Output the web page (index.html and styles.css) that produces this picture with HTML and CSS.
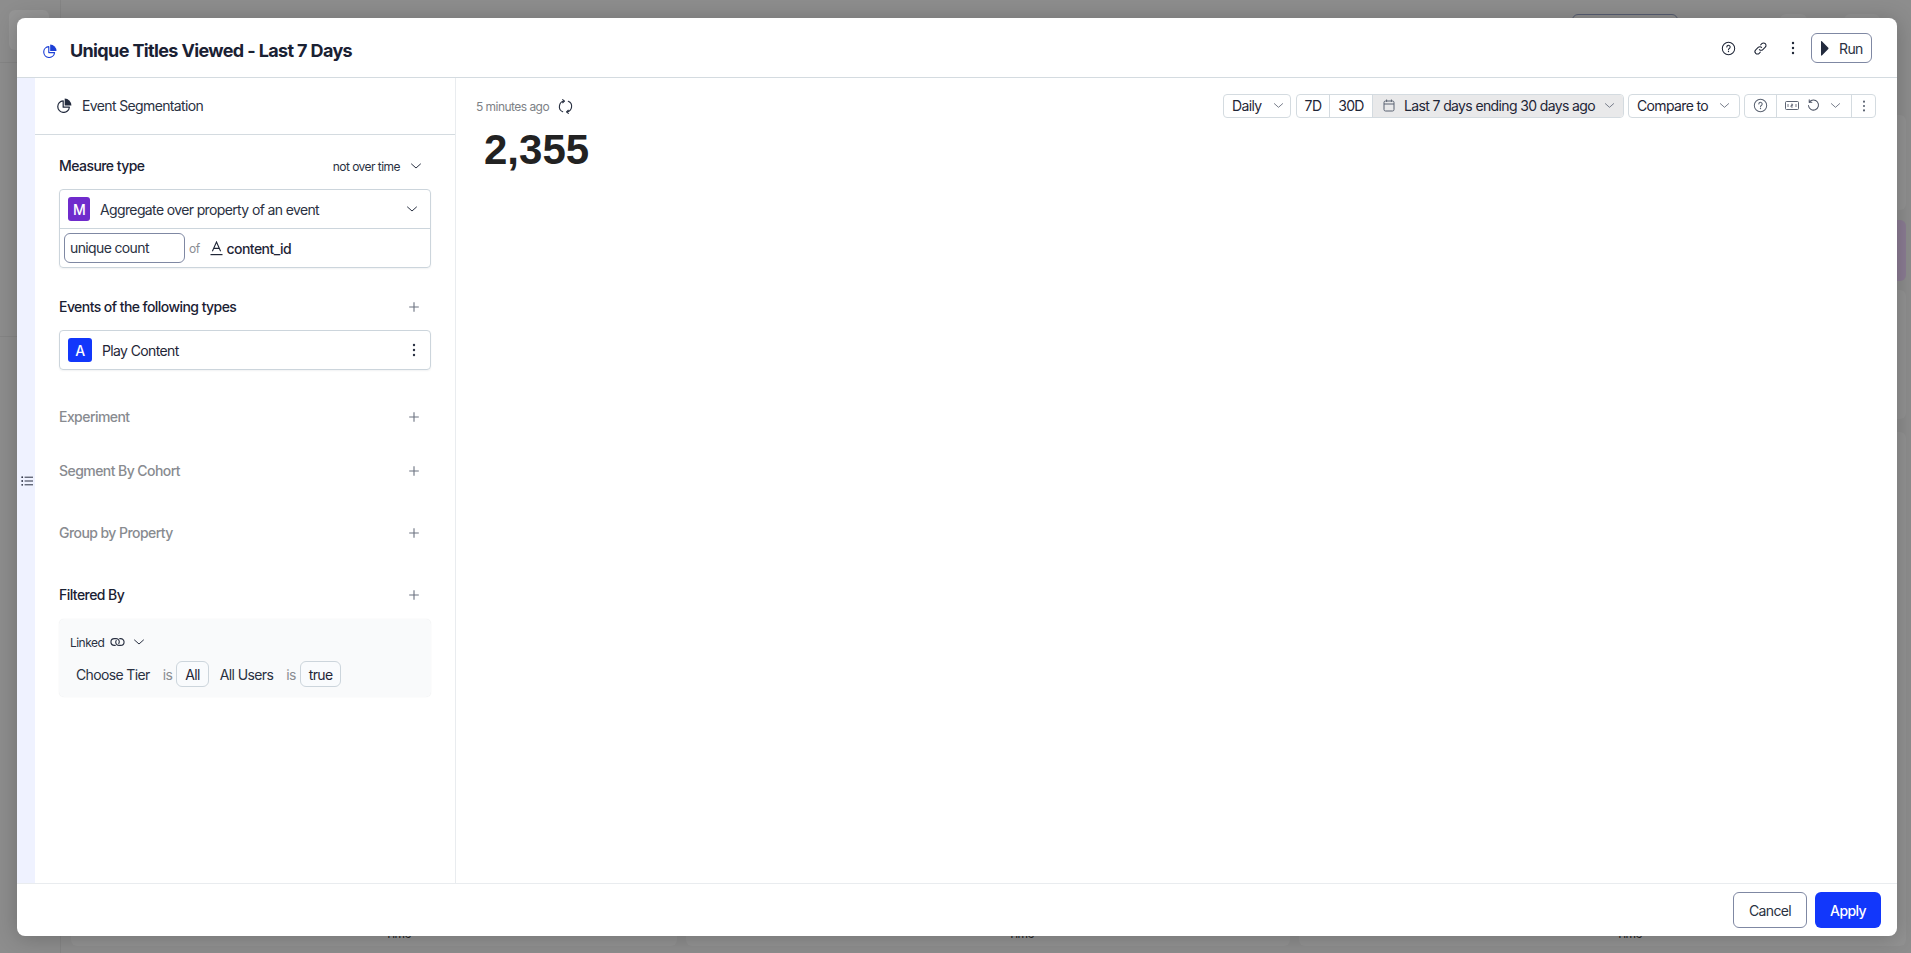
FILE: index.html
```html
<!DOCTYPE html>
<html lang="en">
<head>
<meta charset="utf-8">
<title>Unique Titles Viewed - Last 7 Days</title>
<link rel="stylesheet" href="styles.css">
</head>
<body>
<svg class="sprites" width="0" height="0" aria-hidden="true">
  <symbol id="chev" viewBox="0 0 12 12"><path d="M1.5 4l4.5 4 4.5-4" fill="none" stroke="currentColor" stroke-width="1" stroke-linecap="round" stroke-linejoin="round"/></symbol>
  <symbol id="plus" viewBox="0 0 12 12"><path d="M6 1.2v9.6M1.2 6h9.6" fill="none" stroke="currentColor" stroke-width="1.1"/></symbol>
  <symbol id="kebab" viewBox="0 0 12 16"><circle cx="6" cy="3" r="1.2" fill="currentColor"/><circle cx="6" cy="8" r="1.2" fill="currentColor"/><circle cx="6" cy="13" r="1.2" fill="currentColor"/></symbol>
  <symbol id="help" viewBox="0 0 16 16"><circle cx="8" cy="8" r="6.6" fill="none" stroke="currentColor" stroke-width="1.1"/><path d="M6.2 6.4a1.8 1.8 0 1 1 2.7 1.6c-.6.35-.9.7-.9 1.3" fill="none" stroke="currentColor" stroke-width="1.1" stroke-linecap="round"/><circle cx="8" cy="11.2" r=".7" fill="currentColor"/></symbol>
  <symbol id="pie" viewBox="0 0 16 16"><path d="M6.6 3a6.2 6.2 0 1 0 6.6 6.8H6.6z" fill="none" stroke="currentColor" stroke-width="1.3" stroke-linejoin="round"/><path d="M8.2 .6v7.5h7.2A7.3 7.3 0 0 0 8.2 .6z" fill="currentColor"/></symbol>
</svg>

<div class="backdrop">
  <div class="rail">
    <div class="rail-top"><span class="rail-logo"></span></div>
    <div class="rail-mid"></div>
  </div>
  <div class="dash">
    <div class="dash-top">
      <span class="ghost-btn ghost-dark"></span>
      <span class="ghost-btn ghost-sm"></span>
      <span class="ghost-btn ghost-md"></span>
    </div>
    <div class="dash-grid">
      <div class="dash-card"><span class="time-label time-1">Time</span></div>
      <div class="dash-card"><span class="time-label time-2">Time</span></div>
      <div class="dash-stack">
        <div class="dash-card card-a"></div>
        <div class="dash-card card-purple"></div>
        <div class="dash-card card-b"></div>
        <div class="dash-card card-c"><span class="time-label time-3">Time</span></div>
      </div>
    </div>
  </div>
</div>

<div class="scrim">
  <div class="modal">
    <header class="modal-head">
      <svg class="title-icon"><use href="#pie"/></svg>
      <h1 class="title">Unique Titles Viewed - Last 7 Days</h1>
      <div class="head-actions">
        <svg class="hicon"><use href="#help"/></svg>
        <svg class="hicon link-icon" viewBox="0 0 16 16"><g fill="none" stroke="currentColor" stroke-width="1.1" stroke-linecap="round"><path d="M6.8 9.2a2.6 2.6 0 0 0 3.7 0l2.6-2.6a2.6 2.6 0 0 0-3.7-3.7L8.2 4.1"/><path d="M9.2 6.8a2.6 2.6 0 0 0-3.7 0L2.9 9.4a2.6 2.6 0 0 0 3.7 3.7l1.2-1.2"/></g></svg>
        <svg class="hicon kebab-icon"><use href="#kebab"/></svg>
        <button class="run-btn"><svg class="play" viewBox="0 0 9 15"><path d="M1 0.6c0-.5.5-.7.9-.4l6.4 6.6c.3.3.3.8 0 1.1l-6.4 6.6c-.4.3-.9.1-.9-.4z" fill="currentColor"/></svg><span>Run</span></button>
      </div>
    </header>

    <div class="modal-body">
      <div class="strip">
        <svg class="list-icon" viewBox="0 0 12 12"><g fill="#2a3142"><circle cx="1.2" cy="2.2" r=".9"/><circle cx="1.2" cy="6" r=".9"/><circle cx="1.2" cy="9.8" r=".9"/></g><path d="M3.6 2.2H12M3.6 6H12M3.6 9.8H12" stroke="#2a3142" stroke-width="1"/></svg>
      </div>

      <aside class="side">
        <div class="side-head">
          <svg class="seg-icon"><use href="#pie"/></svg>
          <span>Event Segmentation</span>
        </div>
        <div class="side-content">
          <div class="sec-row sec-row-measure">
            <span class="sec-label">Measure type</span>
            <span class="over-time">not over time<svg class="chev chev-time"><use href="#chev"/></svg></span>
          </div>
          <div class="box box-measure">
            <div class="measure-top">
              <span class="badge badge-m">M</span>
              <span class="measure-text">Aggregate over property of an event</span>
              <svg class="chev chev-measure"><use href="#chev"/></svg>
            </div>
            <div class="measure-bottom">
              <span class="count-select">unique count</span>
              <span class="of">of</span>
              <svg class="prop-icon" viewBox="0 0 13 15"><path d="M2.4 10.2L6.5 1l4.1 9.2M3.7 7.4h5.6" fill="none" stroke="#1f2637" stroke-width="1.1"/><path d="M.5 13.6h12" stroke="#1f2637" stroke-width="1.2"/></svg>
              <span class="prop-name">content_id</span>
            </div>
          </div>

          <div class="sec-row gap-events">
            <span class="sec-label">Events of the following types</span>
            <svg class="plus"><use href="#plus"/></svg>
          </div>
          <div class="box box-event">
            <span class="badge badge-a">A</span>
            <span class="event-text">Play Content</span>
            <svg class="event-kebab"><use href="#kebab"/></svg>
          </div>

          <div class="sec-row gap-experiment">
            <span class="sec-label muted">Experiment</span>
            <svg class="plus"><use href="#plus"/></svg>
          </div>
          <div class="sec-row gap-cohort">
            <span class="sec-label muted">Segment By Cohort</span>
            <svg class="plus"><use href="#plus"/></svg>
          </div>
          <div class="sec-row gap-group">
            <span class="sec-label muted">Group by Property</span>
            <svg class="plus"><use href="#plus"/></svg>
          </div>
          <div class="sec-row gap-group">
            <span class="sec-label">Filtered By</span>
            <svg class="plus"><use href="#plus"/></svg>
          </div>
          <div class="filter-panel">
            <div class="linked">
              <span>Linked</span>
              <svg class="linked-icon" viewBox="0 0 16 10"><g fill="none" stroke="#2a3142" stroke-width="1.2" stroke-linecap="round"><path d="M5.6 8.6H4.6a3.6 3.6 0 0 1 0-7.2h2a3.4 3.4 0 0 1 2.8 5.2"/><path d="M10.4 1.4h1a3.6 3.6 0 0 1 0 7.2h-2a3.4 3.4 0 0 1-2.8-5.2"/></g></svg>
              <svg class="chev chev-linked"><use href="#chev"/></svg>
            </div>
            <div class="filters">
              <span class="f-name f-tier">Choose Tier</span>
              <span class="f-is">is</span>
              <span class="chip">All</span>
              <span class="f-name f-users">All Users</span>
              <span class="f-is">is</span>
              <span class="chip">true</span>
            </div>
          </div>
        </div>
      </aside>

      <main class="main">
        <div class="toolbar">
          <div class="status">
            <span class="ago">5 minutes ago</span>
            <svg class="refresh" viewBox="0 0 16 16"><g fill="none" stroke="#2a3142" stroke-width="1.2" stroke-linecap="round" stroke-linejoin="round"><path d="M5 13.6A6 6 0 0 1 6.6 2.2"/><path d="M11 2.4a6 6 0 0 1-1.6 11.4"/><path d="M5 .6L6.8 2.3 5 4"/><path d="M11 15.4L9.2 13.7 11 12"/></g></svg>
          </div>
          <div class="controls">
            <div class="group group-daily">
              <span class="cell cell-daily">Daily<svg class="chev chev-tb"><use href="#chev"/></svg></span>
            </div>
            <div class="group group-date">
              <span class="cell cell-7d">7D</span>
              <span class="cell cell-30d">30D</span>
              <span class="cell cell-range">
                <svg class="cal" viewBox="0 0 12 13"><g fill="none" stroke="#5b6372" stroke-width="1"><rect x="1" y="2" width="10" height="10" rx="1.5"/><path d="M1 5h10M3.6 .5v2.4M8.4 .5v2.4"/></g></svg>
                Last 7 days ending 30 days ago<svg class="chev chev-range"><use href="#chev"/></svg>
              </span>
            </div>
            <div class="group group-compare">
              <span class="cell cell-compare">Compare to<svg class="chev chev-compare"><use href="#chev"/></svg></span>
            </div>
            <div class="group group-tools">
              <span class="cell cell-help"><svg class="tool-help"><use href="#help"/></svg></span>
              <span class="cell cell-tools">
                <svg class="num-icon" viewBox="0 0 14 9"><rect x=".5" y=".5" width="13" height="8" rx="1" fill="none" stroke="#4b5263" stroke-width=".9"/><path d="M3 3v3M6 3.2h1.6v1.3H6V6h1.8M11 3v3" fill="none" stroke="#4b5263" stroke-width=".8"/></svg>
                <svg class="undo" viewBox="0 0 14 14"><path d="M2.6 3.4A5.4 5.4 0 1 1 1.6 7" fill="none" stroke="#4b5263" stroke-width="1.1" stroke-linecap="round"/><path d="M2.4 .8v2.8h2.8" fill="none" stroke="#4b5263" stroke-width="1.1" stroke-linecap="round" stroke-linejoin="round"/></svg>
                <svg class="chev chev-tools"><use href="#chev"/></svg>
              </span>
              <span class="cell cell-more"><svg class="more"><use href="#kebab"/></svg></span>
            </div>
          </div>
        </div>
        <div class="metric">2,355</div>
      </main>
    </div>

    <footer class="modal-foot">
      <button class="btn btn-cancel">Cancel</button>
      <button class="btn btn-apply">Apply</button>
    </footer>
  </div>
</div>
</body>
</html>
```
FILE: styles.css
```css
* { box-sizing: border-box; letter-spacing: -.045em; }
html, body { margin: 0; height: 100%; }
body {
  position: relative;
  width: 1911px;
  height: 953px;
  overflow: hidden;
  background: #8d8d8d;
  font-family: Inter, "Liberation Sans", sans-serif;
  font-size: 14px;
  color: #1f2637;
}
.sprites { position: absolute; }
svg { display: block; flex: none; }

/* dimmed dashboard behind the dialog */
.backdrop { display: flex; width: 1911px; height: 953px; }
.rail { width: 61px; border-right: 1px solid #858585; flex: none; }
.rail-top { height: 63px; padding: 10px 9px; border-bottom: 1px solid #858585; }
.rail-logo { display: block; width: 40px; height: 40px; border-radius: 6px; background: #969696; }
.rail-mid { height: 274px; border-bottom: 1px solid #858585; }
.dash { flex: 1; padding: 14px 5px 7px 10px; display: flex; flex-direction: column; }
.dash-top { height: 101px; display: flex; justify-content: flex-end; padding-right: 26px; flex: none; }
.ghost-btn { height: 22px; border-radius: 6px; background: #929292; }
.ghost-dark { width: 106px; margin-right: 102px; background: none; border: 1px solid #555c70; }
.ghost-sm { width: 27px; margin-right: 37px; }
.ghost-md { width: 36px; }
.dash-grid { flex: 1; display: grid; grid-template-columns: 606px 604px 1fr; gap: 9px; }
.dash-card { position: relative; border-radius: 6px; background: #929292; }
.dash-stack { display: flex; flex-direction: column; }
.card-a { height: 95px; margin-bottom: 10px; }
.card-purple { height: 61px; margin-bottom: 9px; background: #8b7c93; }
.card-b { height: 129px; margin-bottom: 13px; }
.card-c { flex: 1; }
.time-label { position: absolute; bottom: 5px; font-size: 12px; line-height: 14px; color: #222; }
.time-1 { left: 314px; }
.time-2 { left: 322px; }
.time-3 { left: 317px; }

/* dialog */
.scrim {
  position: absolute;
  inset: 0;
  padding: 18px 14px 17px 17px;
}
.modal {
  height: 918px;
  display: flex;
  flex-direction: column;
  background: #fff;
  border-radius: 8px;
  overflow: hidden;
  box-shadow: 0 2px 22px rgba(0, 0, 0, .22);
}
.modal-head {
  height: 60px;
  flex: none;
  display: flex;
  align-items: center;
  padding: 0 25px 0 26px;
  border-bottom: 1px solid #d4dbe0;
}
.title-icon { width: 14px; height: 14px; color: #1c3fd6; margin: 7px 13px 0 0; }
.title { margin: 7px 0 0; font-size: 18px; line-height: 24px; font-weight: 700; letter-spacing: -.035em; color: #1a2133; }
.head-actions { margin: 1px 0 0 auto; display: flex; align-items: center; color: #1f2637; }
.hicon { width: 15px; height: 15px; margin-right: 17px; }
.link-icon { margin-right: 19px; }
.kebab-icon { width: 12px; height: 16px; margin-right: 12px; }
.run-btn {
  width: 61px;
  height: 30px;
  display: flex;
  align-items: center;
  padding: 0 0 0 8px;
  background: #fff;
  border: 1px solid #7f88a3;
  border-radius: 6px;
  font: 400 14px Inter, sans-serif;
  color: #2a3142;
}
.play { width: 9px; height: 15px; margin-right: 10px; color: #232b3e; }

.modal-body { flex: 1; display: flex; min-height: 0; }
.strip {
  width: 18px;
  flex: none;
  background: #eff2ff;
  padding: 397px 0 0 4px;
}
.list-icon { width: 12px; height: 12px; }
.side { width: 421px; flex: none; border-right: 1px solid #e9ecef; }
.side-head {
  height: 57px;
  display: flex;
  align-items: center;
  padding: 0 0 1px 22px;
  border-bottom: 1px solid #d4dbe0;
  color: #2a3142;
}
.seg-icon { width: 15px; height: 15px; margin-right: 10px; color: #232b3e; }
.side-content { padding: 21px 24px 0; }
.sec-row { height: 20px; display: flex; align-items: center; justify-content: space-between; padding-right: 11px; }
.sec-row-measure { padding-right: 9px; }
.sec-label { font-weight: 500; line-height: 20px; letter-spacing: -.04em; color: #1a2133; }
.muted { color: #888b90; }
.over-time { display: flex; align-items: center; font-size: 12px; color: #2a3142; }
.chev { width: 12px; height: 12px; color: #2a3142; }
.chev-time { margin-left: 10px; }
.plus { width: 12px; height: 12px; color: #6b7280; }

.box {
  border: 1px solid #ccd5dc;
  border-radius: 4px;
  box-shadow: 0 1px 2px rgba(20, 30, 50, .06);
}
.box-measure { margin-top: 13px; height: 79px; }
.measure-top { height: 39px; display: flex; align-items: center; padding-left: 8px; border-bottom: 1px solid #ccd5dc; }
.badge {
  display: flex;
  align-items: center;
  justify-content: center;
  color: #fff;
  font-weight: 500;
  font-size: 14px;
  border-radius: 3px;
  flex: none;
}
.badge-m { width: 22px; height: 24px; background: #6f2bcc; }
.badge-a { width: 24px; height: 24px; background: #1237fb; }
.measure-text { margin-left: 10px; color: #2a3142; }
.chev-measure { margin-left: auto; margin-right: 12px; }
.measure-bottom { height: 38px; display: flex; align-items: center; padding-left: 4px; }
.count-select {
  width: 121px;
  height: 30px;
  display: flex;
  align-items: center;
  padding: 0 0 1px 5px;
  border: 1px solid #7f88a3;
  border-radius: 6px;
  color: #2a3142;
}
.of { margin-left: 4px; font-size: 12px; color: #8a8d92; }
.prop-icon { width: 13px; height: 15px; margin-left: 10px; }
.prop-name { margin-left: 4px; font-weight: 500; letter-spacing: -.04em; color: #1f2637; }

.gap-events { margin-top: 29px; }
.box-event { margin-top: 13px; height: 40px; display: flex; align-items: center; padding-left: 8px; }
.event-text { margin-left: 10px; color: #1f2637; }
.event-kebab { width: 12px; height: 16px; margin-left: auto; margin-right: 10px; color: #2a3142; }
.gap-experiment { margin-top: 37px; }
.gap-cohort { margin-top: 34px; }
.gap-group { margin-top: 42px; }

.filter-panel {
  margin-top: 14px;
  height: 78px;
  padding: 13px 11px 0;
  background: #f9fafb;
  border-radius: 5px;
  box-shadow: 0 0 1px rgba(20, 30, 50, .12);
}
.linked { height: 20px; display: flex; align-items: center; font-size: 12px; color: #2a3142; }
.linked-icon { width: 15px; height: 10px; margin-left: 6px; }
.chev-linked { margin-left: 8px; }
.filters { margin-top: 9px; display: flex; align-items: center; }
.f-name { color: #2a3142; }
.f-tier { margin-left: 6px; margin-right: 13px; }
.f-users { margin-left: 11px; margin-right: 13px; }
.f-is { color: #8a8d92; margin-right: 4px; }
.chip {
  height: 26px;
  padding: 0 8px;
  display: flex;
  align-items: center;
  background: #f9fbfd;
  border: 1px solid #ccd5dc;
  border-radius: 6px;
  color: #1f2637;
}

.main { flex: 1; padding: 16px 21px 0 20px; min-width: 0; }
.toolbar { display: flex; align-items: center; justify-content: space-between; height: 24px; }
.status { display: flex; align-items: center; }
.ago { font-size: 12px; color: #7d8186; }
.refresh { width: 15px; height: 15px; margin-left: 9px; }
.controls { display: flex; gap: 4px; font-size: 14px; color: #1f2637; }
.group { display: flex; height: 24px; border: 1px solid #d4dbe0; border-radius: 4px; overflow: hidden; }
.group-daily { width: 68px; margin-right: 1px; }
.group-date { width: 328px; }
.group-compare { width: 112px; }
.group-tools { width: 132px; }
.cell { display: flex; align-items: center; height: 100%; padding-bottom: 1px; white-space: nowrap; }
.cell + .cell { border-left: 1px solid #d4dbe0; }
.cell-daily { flex: 1; padding-left: 8px; }
.chev-tb { width: 11px; height: 11px; margin-left: 11px; color: #6b7280; }
.cell-7d { width: 32px; justify-content: center; }
.cell-30d { width: 43px; justify-content: center; }
.cell-range { flex: 1; padding-left: 10px; background: #e9e9ea; }
.cal { width: 12px; height: 13px; margin-right: 9px; }
.chev-range { width: 11px; height: 11px; margin-left: 9px; color: #6b7280; }
.cell-compare { flex: 1; padding-left: 8px; }
.chev-compare { width: 11px; height: 11px; margin-left: 11px; color: #6b7280; }
.cell-help { width: 31px; justify-content: center; }
.tool-help { width: 15px; height: 15px; color: #5b6372; }
.cell-tools { width: 75px; padding-left: 8px; }
.num-icon { width: 14px; height: 9px; }
.undo { width: 13px; height: 13px; margin-left: 8px; }
.chev-tools { width: 11px; height: 11px; margin-left: 10px; color: #6b7280; }
.cell-more { flex: 1; justify-content: center; }
.more { width: 12px; height: 14px; color: #5b6372; }
.metric {
  margin-top: 8px;
  padding-left: 8px;
  font-family: "Liberation Sans", Arial, sans-serif;
  font-size: 42px;
  line-height: 48px;
  font-weight: 700;
  letter-spacing: 0;
  color: #222;
}

.modal-foot {
  height: 53px;
  flex: none;
  display: flex;
  justify-content: flex-end;
  gap: 8px;
  padding: 8px 16px 0 0;
  border-top: 1px solid #e9ecef;
}
.btn { height: 36px; border-radius: 6px; font: 400 14px Inter, sans-serif; }
.btn-cancel { width: 74px; background: #fff; border: 1px solid #7f88a3; color: #2a3142; }
.btn-apply { width: 66px; background: #1237fb; border: 0; color: #fff; font-weight: 500; }
```
